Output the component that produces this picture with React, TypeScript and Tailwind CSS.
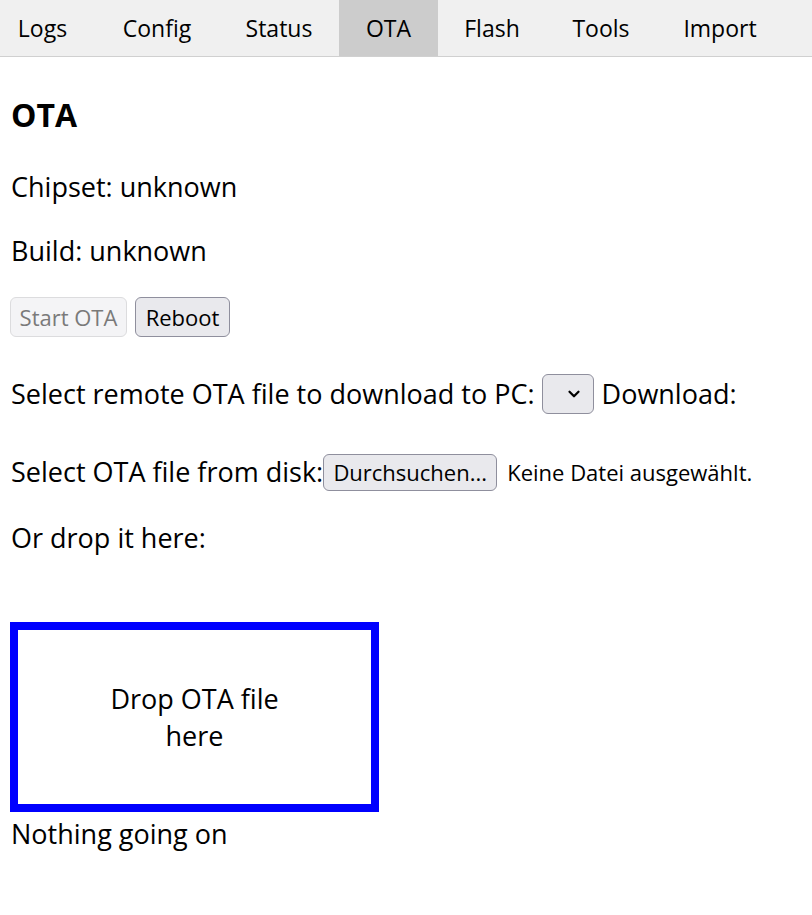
import { ChevronDown } from 'lucide-react'

const tabs = [
  { name: 'Logs', w: 'w-[105px] -ml-[10px]' },
  { name: 'Config', w: 'w-[124px]' },
  { name: 'Status', w: 'w-[120px]' },
  { name: 'OTA', w: 'w-[99px]', active: true },
  { name: 'Flash', w: 'w-[108px]' },
  { name: 'Tools', w: 'w-[110px]' },
  { name: 'Import', w: 'w-[128px]' },
]

export default function App() {
  return (
    <div className="min-h-[915px] bg-white text-black font-['Open_Sans',sans-serif] text-[27px] overflow-hidden">
      <div className="flex h-[57px] bg-[#f0f0f0] border-b border-[#d0d0d0] text-[23px]">
        {tabs.map((t) => (
          <div
            key={t.name}
            className={`${t.w} shrink-0 flex items-center justify-center ${t.active ? 'bg-[#cccccc]' : ''}`}
          >
            {t.name}
          </div>
        ))}
      </div>

      <div className="px-[10px]">
        <h2 className="pt-[38px] text-[32px] font-bold leading-[40px] pl-px">OTA</h2>

        <p className="mt-[34px] leading-[36px] pl-px">Chipset: unknown</p>
        <p className="mt-[28px] leading-[36px] pl-px">Build: unknown</p>

        <div className="mt-[28px] flex gap-2 text-[22px]">
          <button
            disabled
            className="h-[40px] w-[117px] rounded-md border border-[#dcdcde] bg-[#f4f4f6] text-[#7a7a7a]"
          >
            Start OTA
          </button>
          <button className="h-[40px] w-[95px] rounded-md border border-[#8f8f9d] bg-[#e9e9ed]">
            Reboot
          </button>
        </div>

        <div className="mt-[37px] flex items-center h-[40px] pl-px leading-[36px]">
          <span>Select remote OTA file to download to PC:</span>
          <span className="ml-[7px] w-[52px] h-[40px] rounded-md border border-[#8f8f9d] bg-[#e9e9ed] flex items-center justify-center">
            <ChevronDown className="w-[18px] h-[18px] ml-[12px]" strokeWidth={3} />
          </span>
          <span className="ml-[8px]">Download:</span>
        </div>

        <div className="mt-[38px] flex items-center h-[40px] pl-px leading-[36px]">
          <span>Select OTA file from disk:</span>
          <span className="h-[37px] w-[174px] rounded-md border border-[#8f8f9d] bg-[#e9e9ed] flex items-center justify-center text-[22px]">
            Durchsuchen...
          </span>
          <span className="ml-[10px] text-[22px]">Keine Datei ausgewählt.</span>
        </div>

        <p className="mt-[28px] leading-[36px] pl-px">Or drop it here:</p>

        <div className="mt-[66px] w-[369px] h-[190px] border-[8px] border-[#0000ff] flex items-center justify-center">
          <p className="w-[190px] text-center leading-[37px]">Drop OTA file here</p>
        </div>

        <p className="mt-[4px] leading-[36px] pl-px">Nothing going on</p>
      </div>
    </div>
  )
}
